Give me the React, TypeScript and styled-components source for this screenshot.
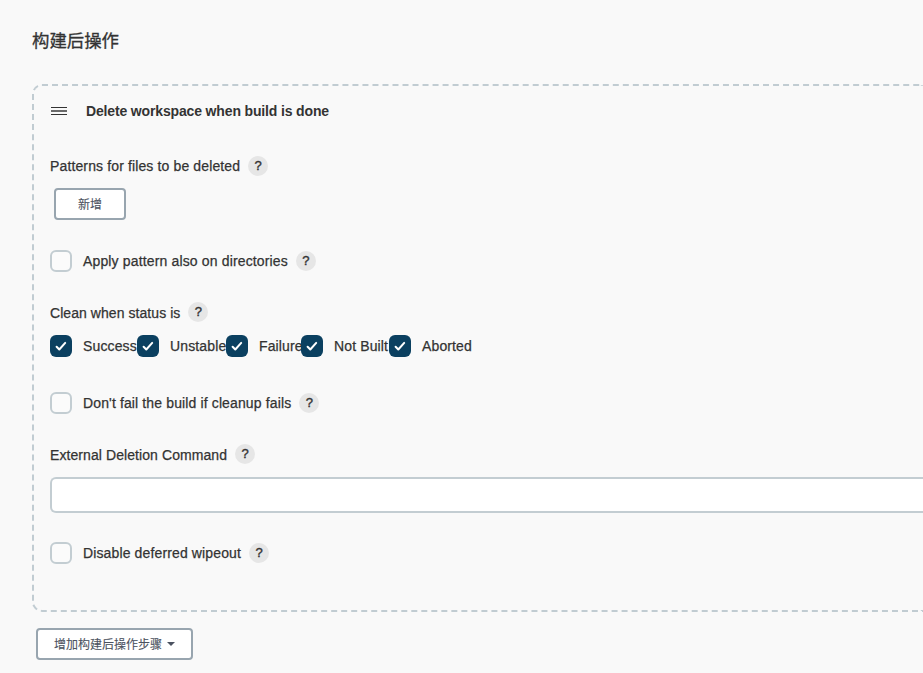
import React from "react";
import styled, { createGlobalStyle } from "styled-components";

const GlobalStyle = createGlobalStyle`
  * { box-sizing: border-box; }
  body {
    margin: 0;
    background: #f9f9f9;
    color: #333;
    font-family: "Liberation Sans", "Noto Sans CJK SC", sans-serif;
    font-size: 14px;
  }
`;

const Page = styled.main`
  height: 673px;
  padding: 25px 0 0 32px;
  overflow: hidden;
`;

const Title = styled.h2`
  margin: 0 0 29px;
  height: 30px;
  line-height: 30px;
  font-family: "Noto Sans CJK SC", sans-serif;
  font-size: 17.4px;
  font-weight: 400;
  -webkit-text-stroke: 0.3px #333;
`;

const Panel = styled.section`
  height: 528px;
  padding: 0 0 0 16px;
  border: 2px dashed #c1ccd2;
  border-right: none;
  border-radius: 10px 0 0 10px;
`;

const PanelHeader = styled.header`
  display: flex;
  align-items: center;
  height: 50px;
  gap: 18px;
  font-weight: 700;
`;

const Row = styled.div<{ $top: number; $height?: number }>`
  display: flex;
  align-items: center;
  height: ${(p) => p.$height ?? 22}px;
  margin-top: ${(p) => p.$top}px;
`;

const Text = styled.span<{ $spacing?: number; $bold?: boolean; $drop?: number }>`
  line-height: 20px;
  white-space: nowrap;
  letter-spacing: ${(p) => p.$spacing ?? 0.13}px;
  padding-top: ${(p) => p.$drop ?? 0}px;
  -webkit-text-stroke: ${(p) => (p.$bold ? 0 : 0.25)}px #333;
`;

const Help = styled.span`
  width: 20px;
  height: 20px;
  margin-left: 8px;
  flex: none;
  border-radius: 50%;
  background: #e6e6e6;
  font-size: 13px;
  line-height: 20px;
  text-align: center;
  -webkit-text-stroke: 0.4px #333;
`;

const Box = styled.span<{ $checked?: boolean }>`
  display: flex;
  align-items: center;
  justify-content: center;
  flex: none;
  width: 22px;
  height: 22px;
  margin-right: 11px;
  border: ${(p) => (p.$checked ? "none" : "2px solid #c3cdd2")};
  border-radius: 6px;
  background: ${(p) => (p.$checked ? "#0b4060" : "#fbfbfb")};
`;

const Status = styled.label<{ $width: number }>`
  display: flex;
  align-items: center;
  width: ${(p) => p.$width}px;
`;

const Input = styled.input`
  display: block;
  width: 100%;
  height: 36px;
  margin-top: 13px;
  border: 2px solid #c3cdd2;
  border-right: none;
  border-radius: 6px 0 0 6px;
  background: #fff;
`;

const Button = styled.button<{ $width: number; $margin: string }>`
  display: flex;
  align-items: center;
  justify-content: center;
  gap: 5px;
  width: ${(p) => p.$width}px;
  height: 32px;
  margin: ${(p) => p.$margin};
  padding: 0 0 1px;
  border: 2px solid #98a5af;
  border-radius: 4px;
  background: #fff;
  color: #4b5260;
  font: 400 12px "Noto Sans CJK SC", sans-serif;
  -webkit-text-stroke: 0.1px #4b5260;
`;

const DragHandle = () => (
  <svg width="18" height="18" viewBox="0 0 18 18">
    <path d="M1 5.5h16M1 12.5h16" stroke="#333" strokeWidth="1.1" />
    <path d="M1 9h16" stroke="#6a6a6a" strokeWidth="2" />
  </svg>
);

const Check = () => (
  <svg width="22" height="22" viewBox="0 0 22 22" fill="none">
    <path d="M6.6 11.7l2.7 2.8 5.9-6.6" stroke="#fff" strokeWidth="2" strokeLinecap="round" strokeLinejoin="round" />
  </svg>
);

const Caret = () => (
  <svg width="8" height="4" viewBox="0 0 8 4">
    <path d="M0 0h8L4 4z" fill="#4b5260" />
  </svg>
);

const statuses = [
  { name: "Success", width: 87 },
  { name: "Unstable", width: 89 },
  { name: "Failure", width: 75 },
  { name: "Not Built", width: 88 },
  { name: "Aborted", width: 90 },
];

export default function App() {
  return (
    <>
      <GlobalStyle />
      <Page>
        <Title>构建后操作</Title>
        <Panel>
          <PanelHeader>
            <DragHandle />
            <Text $bold $spacing={-0.15}>Delete workspace when build is done</Text>
          </PanelHeader>
          <Row $top={20} $height={20}>
            <Text>Patterns for files to be deleted</Text>
            <Help>?</Help>
          </Row>
          <Button $width={72} $margin="12px 0 0 4px">新增</Button>
          <Row $top={30}>
            <Box />
            <Text $spacing={0.15}>Apply pattern also on directories</Text>
            <Help>?</Help>
          </Row>
          <Row $top={30} $height={20}>
            <Text $drop={2} $spacing={0.06}>Clean when status is</Text>
            <Help>?</Help>
          </Row>
          <Row $top={13}>
            {statuses.map((s) => (
              <Status key={s.name} $width={s.width}>
                <Box $checked><Check /></Box>
                <Text $spacing={0.13}>{s.name}</Text>
              </Status>
            ))}
          </Row>
          <Row $top={35}>
            <Box />
            <Text>Don't fail the build if cleanup fails</Text>
            <Help>?</Help>
          </Row>
          <Row $top={30} $height={20}>
            <Text $drop={2} $spacing={0.08}>External Deletion Command</Text>
            <Help>?</Help>
          </Row>
          <Input />
          <Row $top={29}>
            <Box />
            <Text>Disable deferred wipeout</Text>
            <Help>?</Help>
          </Row>
        </Panel>
        <Button $width={157} $margin="16px 0 0 4px">
          增加构建后操作步骤
          <Caret />
        </Button>
      </Page>
    </>
  );
}
